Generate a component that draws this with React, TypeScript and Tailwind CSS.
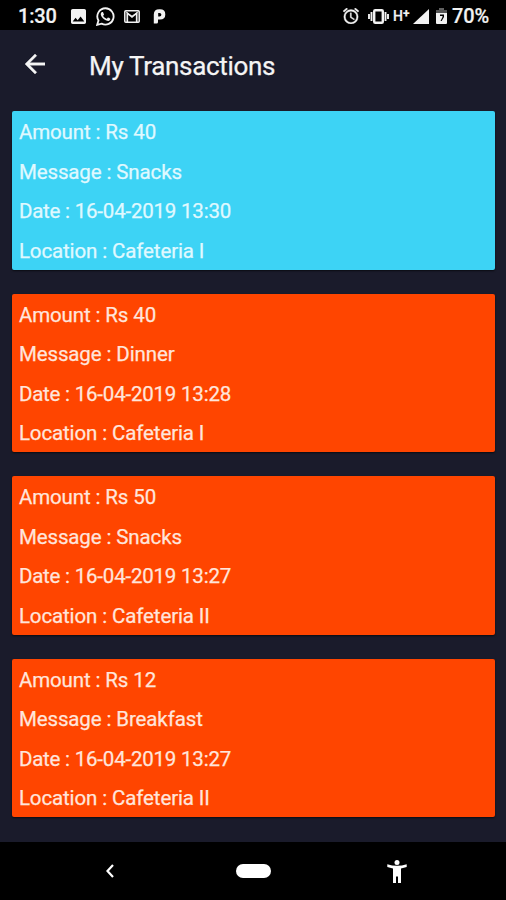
type Transaction = {
  amount: number;
  message: string;
  date: string;
  location: string;
  credit?: boolean;
};

const transactions: Transaction[] = [
  { amount: 40, message: "Snacks", date: "16-04-2019 13:30", location: "Cafeteria I", credit: true },
  { amount: 40, message: "Dinner", date: "16-04-2019 13:28", location: "Cafeteria I" },
  { amount: 50, message: "Snacks", date: "16-04-2019 13:27", location: "Cafeteria II" },
  { amount: 12, message: "Breakfast", date: "16-04-2019 13:27", location: "Cafeteria II" },
];

function StatusBar() {
  return (
    <header className="flex h-[30px] shrink-0 items-center bg-black pt-0.5 pl-[18px] pr-4 text-[#f2f2f2]">
      <span className="w-[53px] text-[20px] leading-7 font-medium tracking-[-0.2px] [-webkit-text-stroke:0.2px]">1:30</span>
      <svg className="h-[15px] w-[15px]" viewBox="3 3 18 18" fill="currentColor">
        <path d="M21 19V5c0-1.1-.9-2-2-2H5c-1.1 0-2 .9-2 2v14c0 1.1.9 2 2 2h14c1.1 0 2-.9 2-2zM8.500 13.500l2.500 3.010L14.500 12l4.500 6H5l3.500-4.500z" />
      </svg>
      <svg className="ml-2.5 h-[19px] w-[19px]" viewBox="0 0 24 24" fill="currentColor">
        <path d="M17.472 14.382c-.297-.149-1.758-.867-2.030-.967-.273-.099-.471-.148-.670.150-.197.297-.767.966-.940 1.164-.173.199-.347.223-.644.075-.297-.150-1.255-.463-2.390-1.475-.883-.788-1.480-1.761-1.653-2.059-.173-.297-.018-.458.130-.606.134-.133.298-.347.446-.520.149-.174.198-.298.298-.497.099-.198.050-.371-.025-.520-.075-.149-.669-1.612-.916-2.207-.242-.579-.487-.500-.669-.510-.173-.008-.371-.010-.570-.010-.198 0-.520.074-.792.372-.272.297-1.040 1.016-1.040 2.479 0 1.462 1.065 2.875 1.213 3.074.149.198 2.096 3.200 5.077 4.487.709.306 1.262.489 1.694.625.712.227 1.360.195 1.871.118.571-.085 1.758-.719 2.006-1.413.248-.694.248-1.289.173-1.413-.074-.124-.272-.198-.570-.347" />
        <path d="M12 1.600A10.300 10.300 0 0 0 3.100 17.100L1.500 22.500l5.600-1.500A10.300 10.300 0 1 0 12 1.600Z" fill="none" stroke="currentColor" strokeWidth="2.300" />
      </svg>
      <svg className="ml-[9px] h-[13px] w-4" viewBox="0 0 16 13" fill="none" stroke="currentColor">
        <rect x=".8" y=".8" width="14.400" height="11.400" rx="1" strokeWidth="1.500" />
        <path d="M3.300 12V3.200L8 7l4.700-3.800V12" strokeWidth="1.700" />
        <path d="M1.500 1.500 8 6.400l6.500-4.900" strokeWidth=".8" />
      </svg>
      <svg className="ml-[13px] h-[15px] w-[13px]" viewBox="0 0 13 15" fill="currentColor">
        <path
          fillRule="evenodd"
          d="M.8 14.500V5.500Q.8.300 6.300.300H7Q12.300.300 12.300 5.400T7 10.600H5V13Q5 14.500 3.500 14.500ZM5.200 4V7.400H6.500Q8.400 7.400 8.400 5.700T6.500 4Z"
        />
      </svg>
      <svg className="ml-auto h-4 w-4" viewBox="2 2 20 20" fill="currentColor" stroke="currentColor" strokeWidth=".4">
        <path d="m22 5.720-4.600-3.860-1.290 1.530 4.600 3.860L22 5.720zM7.880 3.390 6.600 1.860 2 5.710l1.290 1.530 4.590-3.850zM12.500 8H11v6l4.750 2.850.750-1.230-4-2.370V8zM12 4a9 9 0 1 0 0 18 9 9 0 0 0 0-18zm0 16a7 7 0 1 1 0-14 7 7 0 0 1 0 14z" />
      </svg>
      <svg className="ml-[9px] h-[15px] w-[21px]" viewBox="0 0 21 15" fill="none" stroke="currentColor">
        <rect x="6.200" y="1.200" width="8.600" height="12.600" rx="1" strokeWidth="2.400" />
        <path d="M3.500 3v9M17.500 3v9M1 5v5M20 5v5" strokeWidth="1.900" />
      </svg>
      <span className="ml-1 flex w-5 items-start text-[14px] leading-[17px] font-medium [-webkit-text-stroke:0.2px]">
        H<span className="text-[12px] leading-[12px] font-bold">+</span>
      </span>
      <svg className="h-[15px] w-4" viewBox="0 0 16 15" fill="currentColor">
        <path d="M0 15 16 0v15z" />
      </svg>
      <svg className="ml-[7px] h-4 w-[11px]" viewBox="0 0 11 16" fill="currentColor">
        <path d="M3 0h5v2H3z" opacity=".4" />
        <path d="M0 2h11v3H0z" opacity=".35" />
        <path fillRule="evenodd" d="M0 5h11v10q0 1-1 1H1q-1 0-1-1zM4 6.500v1.500h2.500v1L4.500 13h1.200l2.300-4V6.500z" />
      </svg>
      <span className="ml-[5px] w-[38px] text-[20px] leading-7 font-medium tracking-[-0.1px] [-webkit-text-stroke:0.2px]">70%</span>
    </header>
  );
}

function TransactionCard({ item }: { item: Transaction }) {
  return (
    <article
      className={`flex h-[158.500px] flex-col rounded-[2px] pt-[2.100px] pl-[6.500px] text-[20.500px] leading-[39.500px] tracking-[-0.12px] shadow-[0_1px_2px_rgba(0,0,0,0.6)] [-webkit-text-stroke:0.25px] ${
        item.credit ? "bg-[#3dd3f5] text-[#e0f9ff]" : "bg-[#ff4500] text-[#ffe5dc]"
      }`}
    >
      <p>Amount : Rs {item.amount}</p>
      <p>Message : {item.message}</p>
      <p className="tracking-[-0.21px]">Date : {item.date}</p>
      <p>Location : {item.location}</p>
    </article>
  );
}

export default function App() {
  return (
    <div className="flex h-[900px] w-[506px] flex-col overflow-hidden bg-[#1a1b2b] font-[Roboto,sans-serif]">
      <StatusBar />
      <div className="flex h-[81px] shrink-0 items-center pb-[9px] pl-[25px] text-[#f5f5f5]">
        <svg className="mb-1 h-5 w-5" viewBox="4 4 16 16" fill="currentColor" stroke="currentColor" strokeWidth=".3">
          <path d="M20 11H7.830l5.590-5.590L12 4l-8 8 8 8 1.410-1.410L7.830 13H20v-2z" />
        </svg>
        <h1 className="ml-11 text-[26px] leading-8 tracking-[-0.32px] [-webkit-text-stroke:0.25px]">My Transactions</h1>
      </div>
      <main className="flex grow flex-col gap-[24.100px] pr-[11.500px] pl-[12.400px]">
        {transactions.map((item, i) => (
          <TransactionCard key={i} item={item} />
        ))}
      </main>
      <nav className="flex h-[58px] shrink-0 items-center bg-black pl-[106px] text-white">
        <svg className="h-[14px] w-2" viewBox="0 0 8 14" fill="none" stroke="currentColor" strokeWidth="2.200">
          <path d="M7 1 1.500 7 7 13" />
        </svg>
        <span className="ml-[122px] h-[14px] w-[35px] rounded-full bg-white" />
        <svg className="ml-[116px] h-[23px] w-5" viewBox="0 0 20 23" fill="currentColor">
          <circle cx="10" cy="2.500" r="2.500" />
          <path d="M.3 4.300Q10 7.300 19.700 4.300v2.700Q17 8 14 8.400V23h-3V16.500H9V23H6V8.400Q3 8 .3 7z" />
        </svg>
      </nav>
    </div>
  );
}
